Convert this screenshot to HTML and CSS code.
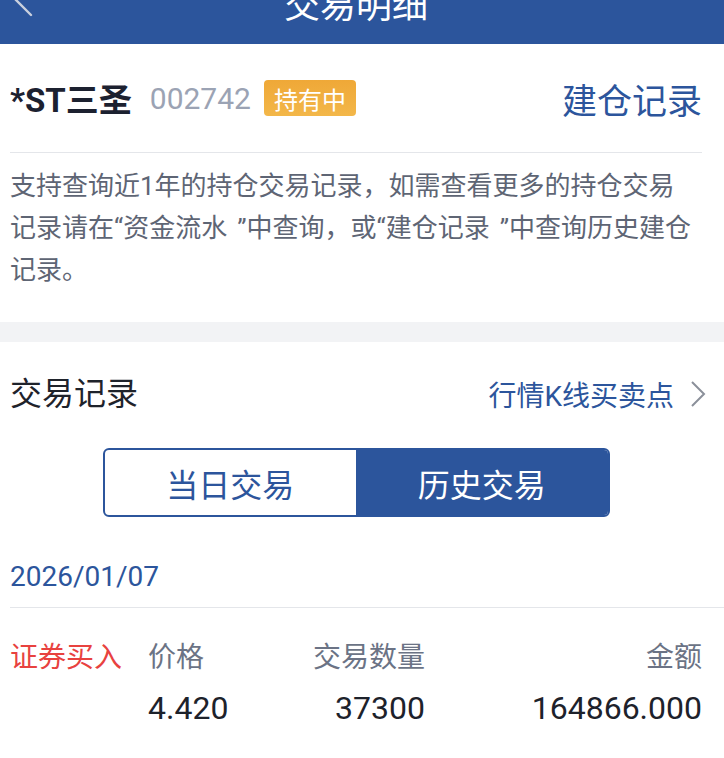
FILE: index.html
```html
<!DOCTYPE html>
<html lang="zh-CN">
<head>
<meta charset="utf-8">
<title>交易明细</title>
<link rel="stylesheet" href="styles.css">
</head>
<body>
<div class="page">
  <header class="nav">
    <svg class="back" width="40" height="24" viewBox="0 0 40 24"><path d="M15 -1 L31 15" fill="none" stroke="#c9d0de" stroke-width="2.4" stroke-linecap="round"/></svg>
    <div class="nav-title">交易明细</div>
    <div></div>
  </header>

  <section class="stock">
    <div class="stock-row">
      <span class="stock-name">*ST三圣</span>
      <span class="stock-code">002742</span>
      <span class="badge">持有中</span>
      <span class="open-link">建仓记录</span>
    </div>
    <div class="divider"></div>
    <p class="desc">支持查询近1年的持仓交易记录，如需查看更多的持仓交易<br>记录请在“资金流水<span class="qr">”</span>中查询，或“建仓记录<span class="qr">”</span>中查询历史建仓<br>记录。</p>
  </section>

  <div class="band"></div>

  <section class="records">
    <div class="rec-head">
      <span class="rec-title">交易记录</span>
      <span class="rec-link">行情K线买卖点<svg class="chev" width="18" height="28" viewBox="0 0 18 28"><path d="M3 2 L15 14 L3 26" fill="none" stroke="#8b909a" stroke-width="2"/></svg></span>
    </div>
    <div class="tabs">
      <div class="tab">当日交易</div>
      <div class="tab tab-active">历史交易</div>
    </div>
    <div class="date">2026/01/07</div>
    <div class="date-line"></div>
    <div class="trade">
      <span class="t-type">证券买入</span>
      <span class="t-label">价格</span>
      <span class="t-label t-right">交易数量</span>
      <span class="t-label t-right">金额</span>
      <span></span>
      <span class="t-val">4.420</span>
      <span class="t-val t-right">37300</span>
      <span class="t-val t-right">164866.000</span>
    </div>
  </section>
</div>
</body>
</html>
```
FILE: styles.css
```css
* { box-sizing: border-box; }
html, body { margin: 0; padding: 0; background: #ffffff; }
body {
  font-family: Roboto, "Noto Sans CJK SC", "Noto Sans", sans-serif;
  width: 724px;
  height: 758px;
  overflow: hidden;
}
.page { width: 724px; }

.nav {
  height: 44px;
  background: #2c559c;
  overflow: hidden;
  display: grid;
  grid-template-columns: 1fr auto 1fr;
  padding: 0 22px 0 10px;
  align-items: start;
}
.back { display: block; margin-left: -10px; }
.nav-title {
  color: #ffffff;
  font-size: 36px;
  line-height: 36px;
  margin-top: -16px;
  font-family: "Noto Sans CJK SC", sans-serif;
}

.stock-row {
  height: 108px;
  display: flex;
  align-items: center;
  padding: 0 22px 0 10px;
}
.stock-name {
  font-size: 33px;
  font-weight: 700;
  color: #1c2130;
}
.stock-code {
  font-size: 30px;
  color: #9ba3b4;
  margin-left: 18px;
}
.badge {
  margin-left: 13px;
  height: 36px;
  padding: 0 10px;
  display: flex;
  align-items: center;
  font-size: 24px;
  color: #ffffff;
  border-radius: 4px;
  background: linear-gradient(180deg, #efa837, #f3b749);
  font-family: "Noto Sans CJK SC", sans-serif;
}
.open-link {
  margin-left: auto;
  font-size: 35px;
  color: #2c559c;
  font-family: "Noto Sans CJK SC", sans-serif;
}
.divider {
  height: 1px;
  background: #e4e6ea;
  margin: 0 22px 0 10px;
}
.desc {
  margin: 0;
  padding: 12px 10px 31px 10px;
  font-size: 26px;
  line-height: 42px;
  color: #5e6574;
  white-space: nowrap;
}
.qr { padding-left: 10px; }
.band { height: 20px; background: #f2f3f5; }

.records { padding: 0 22px 0 10px; }
.rec-head {
  display: flex;
  align-items: center;
  justify-content: space-between;
  padding-top: 30px;
  height: 74px;
  margin-right: -5px;
}
.rec-title {
  font-size: 32px;
  color: #1f232b;
  line-height: 44px;
}
.rec-link {
  display: flex;
  align-items: center;
  font-size: 28px;
  color: #2c559c;
}
.chev { margin-left: 15px; display: block; }

.tabs {
  width: 507px;
  height: 69px;
  margin: 32px auto 0;
  border: 2px solid #2c559c;
  border-radius: 6px;
  overflow: hidden;
  display: grid;
  grid-template-columns: 1fr 1fr;
}
.tab {
  display: flex;
  align-items: center;
  justify-content: center;
  font-size: 32px;
  color: #2c559c;
  font-family: "Noto Sans CJK SC", sans-serif;
}
.tab-active { background: #2c559c; color: #ffffff; }

.date {
  margin-top: 39px;
  font-size: 28px;
  line-height: 42px;
  color: #2c559c;
  padding-bottom: 9px;
}
.date-line {
  height: 1px;
  background: #e4e6ea;
  margin-right: -22px;
}
.trade {
  display: grid;
  grid-template-columns: 138px 1fr 1fr 2fr;
  row-gap: 8px;
  padding-top: 29px;
  align-items: center;
}
.t-type { font-size: 28px; line-height: 42px; color: #e8423f; }
.t-label { font-size: 28px; line-height: 42px; color: #6b7385; }
.t-val { font-size: 32px; line-height: 42px; color: #1d222b; }
.t-right { text-align: right; }
```
